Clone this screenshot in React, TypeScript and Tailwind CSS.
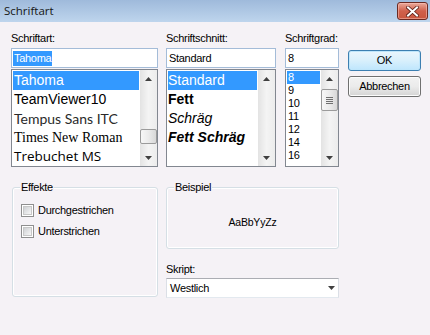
import React from 'react';

const ui = "font-['Liberation_Sans',Arial,sans-serif] text-[11px] tracking-[-0.3px] text-black";

const fontItems = [
  { name: 'Tahoma', cls: "font-['Liberation_Sans',sans-serif]" },
  { name: 'TeamViewer10', cls: "font-['Liberation_Sans',sans-serif]" },
  { name: 'Tempus Sans ITC', cls: "font-['Lato',sans-serif] text-[#2a2a2a]" },
  { name: 'Times New Roman', cls: "font-['Liberation_Serif',serif]" },
  { name: 'Trebuchet MS', cls: "font-['Open_Sans',sans-serif] text-[13.5px]" },
];

const styleItems = [
  { name: 'Standard', cls: '' },
  { name: 'Fett', cls: 'font-bold' },
  { name: 'Schräg', cls: 'italic' },
  { name: 'Fett Schräg', cls: 'font-bold italic' },
];

const sizes = ['8', '9', '10', '11', '12', '14', '16'];

const Arrow = ({ down }: { down?: boolean }) => (
  <svg width="7" height="4" viewBox="0 0 7 4">
    <path d={down ? 'M0 0H7L3.5 4Z' : 'M0 4H7L3.5 0Z'} fill="#404040" />
  </svg>
);

const ScrollBar = ({ offset, thumb, grip }: { offset: number; thumb: number; grip?: boolean }) => (
  <div className="w-[17px] flex flex-col bg-gradient-to-r from-[#e3e3e3] via-[#f4f4f4] to-[#ececec]">
    <div className="h-[17px] flex items-center justify-center shrink-0">
      <Arrow />
    </div>
    <div className="shrink-0" style={{ height: offset }} />
    {thumb > 0 && (
      <div
        className="shrink-0 rounded-[2px] border border-[#9b9b9b] bg-gradient-to-r from-[#f7f7f7] via-[#ebebeb] to-[#d8d8d8] flex flex-col items-center justify-center gap-[1px]"
        style={{ height: thumb }}
      >
        {grip && (
          <>
            <div className="w-[7px] h-[1px] bg-[#6f6f6f]" />
            <div className="w-[7px] h-[1px] bg-[#6f6f6f]" />
            <div className="w-[7px] h-[1px] bg-[#6f6f6f]" />
            <div className="w-[7px] h-[1px] bg-[#6f6f6f]" />
          </>
        )}
      </div>
    )}
    <div className="flex-1" />
    <div className="h-[17px] flex items-center justify-center shrink-0">
      <Arrow down />
    </div>
  </div>
);

const TextBox = ({ children, w }: { children: React.ReactNode; w: string }) => (
  <div className={`${w} h-[20px] border border-[#a4bcd8] bg-white flex items-center px-[1px] overflow-hidden`}>
    {children}
  </div>
);

const Label = ({ children }: { children: React.ReactNode }) => (
  <div className="h-[15px] leading-[15px] mb-[2px]">{children}</div>
);

const CheckBox = ({ label }: { label: string }) => (
  <div className="flex items-center h-[13px]">
    <div className="w-[13px] h-[13px] border border-[#8f8f8f] bg-white p-[1px] shrink-0">
      <div className="w-full h-full border border-[#c8c8c8] bg-gradient-to-br from-[#cfd1d4] to-[#f7f7f7]" />
    </div>
    <span className="ml-[4px] leading-[13px]">{label}</span>
  </div>
);

export default function App() {
  return (
    <div className={`w-[430px] h-[335px] bg-[#f5f2f6] overflow-hidden ${ui}`}>
      {/* title bar */}
      <div className="h-[22px] bg-gradient-to-b from-[#9fbadb] to-[#bed5ed] flex items-start justify-between">
        <span className="font-['Open_Sans',sans-serif] text-[11.5px] tracking-[0px] text-[#151515] ml-[4px] mt-[3px] leading-[16px]">
          Schriftart
        </span>
        <div className="mt-[2px] mr-[2px] w-[31px] h-[18px] rounded-[3px] border border-[#6b2a22] bg-gradient-to-b from-[#e9a99b] via-[#d0604b] to-[#c9573f] flex items-center justify-center shadow-[inset_0_0_0_1px_rgba(255,200,190,0.5)]">
          <svg width="13" height="11" viewBox="0 0 13 11">
            <path d="M2 1.5L11 9.5M11 1.5L2 9.5" stroke="#5a1d16" strokeWidth="3.6" strokeLinecap="square" />
            <path d="M2 1.5L11 9.5M11 1.5L2 9.5" stroke="#ffffff" strokeWidth="2" strokeLinecap="square" />
          </svg>
        </div>
      </div>

      <div className="pl-[11px] pt-[9px]">
        {/* top row */}
        <div className="flex">
          <div className="w-[147px]">
            <Label>Schriftart:</Label>
            <TextBox w="w-[147px]">
              <span className="bg-[#3399ff] text-white px-[1px] leading-[15px]">Tahoma</span>
            </TextBox>
            <div className="mt-[1px] w-[147px] h-[98px] border border-[#828790] bg-white flex p-[1px] pr-0">
              <div className="flex-1 overflow-hidden text-[14px] tracking-[0px]">
                {fontItems.map((f, i) => (
                  <div
                    key={f.name}
                    className={`h-[19px] leading-[19px] pl-[1px] whitespace-nowrap ${f.cls} ${i === 0 ? 'bg-[#3399ff] text-white' : ''}`}
                  >
                    {f.name}
                  </div>
                ))}
              </div>
              <div className="ml-[1px] -my-[1px] flex">
                <ScrollBar offset={42} thumb={15} />
              </div>
            </div>
          </div>

          <div className="w-[110px] ml-[8px]">
            <Label>Schriftschnitt:</Label>
            <TextBox w="w-[110px]">
              <span className="pl-[1px]">Standard</span>
            </TextBox>
            <div className="mt-[1px] w-[110px] h-[98px] border border-[#828790] bg-white flex p-[1px] pr-0">
              <div className="flex-1 overflow-hidden text-[14px] tracking-[0px] font-['Liberation_Sans',sans-serif]">
                {styleItems.map((s, i) => (
                  <div
                    key={s.name}
                    className={`h-[19px] leading-[19px] whitespace-nowrap ${s.cls} ${i === 0 ? 'bg-[#3399ff] text-white' : ''}`}
                  >
                    {s.name}
                  </div>
                ))}
              </div>
              <div className="ml-[1px] -my-[1px] flex">
                <ScrollBar offset={0} thumb={0} />
              </div>
            </div>
          </div>

          <div className="w-[54px] ml-[9px]">
            <Label>Schriftgrad:</Label>
            <TextBox w="w-[54px]">
              <span className="pl-[1px]">8</span>
            </TextBox>
            <div className="mt-[1px] w-[54px] h-[98px] border border-[#828790] bg-white flex p-[1px] pr-0">
              <div className="flex-1 overflow-hidden">
                {sizes.map((s, i) => (
                  <div
                    key={s}
                    className={`h-[13px] leading-[13px] pl-[1px] ${i === 0 ? 'bg-[#3399ff] text-white' : ''}`}
                  >
                    {s}
                  </div>
                ))}
              </div>
              <div className="ml-[1px] -my-[1px] flex">
                <ScrollBar offset={2} thumb={22} grip />
              </div>
            </div>
          </div>

          <div className="w-[73px] ml-[9px] pt-[19px] flex flex-col gap-[5px]">
            <div className="h-[21px] rounded-[3px] border border-[#3c7fb1] bg-gradient-to-b from-[#eaf6fd] via-[#d9f0fc] to-[#bee6fd] shadow-[inset_0_0_0_1px_#bfe6fb] flex items-center justify-center">
              OK
            </div>
            <div className="h-[21px] rounded-[3px] border border-[#707070] bg-gradient-to-b from-[#f2f2f2] via-[#ebebeb] to-[#d4d4d4] shadow-[inset_0_0_0_1px_#fcfcfc] flex items-center justify-center">
              Abbrechen
            </div>
          </div>
        </div>

        {/* bottom row */}
        <div className="flex mt-[20px]">
          <div className="relative ml-[1px] w-[146px] h-[110px] rounded-[3px] border border-[#d5dfe5] shadow-[inset_0_0_0_1px_#ffffff] pt-[16px] pl-[8px] flex flex-col gap-[8px]">
            <span className="absolute -top-[8px] left-[7px] px-[1px] bg-[#f5f2f6] leading-[15px]">Effekte</span>
            <CheckBox label="Durchgestrichen" />
            <CheckBox label="Unterstrichen" />
          </div>

          <div className="ml-[8px] w-[173px]">
            <div className="relative h-[62px] rounded-[3px] border border-[#d5dfe5] shadow-[inset_0_0_0_1px_#ffffff] flex items-center justify-center pt-[9px]">
              <span className="absolute -top-[8px] left-[7px] px-[1px] bg-[#f5f2f6] leading-[15px]">Beispiel</span>
              <span className="font-['Liberation_Sans',sans-serif] text-[10.5px] tracking-[-0.2px]">AaBbYyZz</span>
            </div>
            <div className="mt-[13px] h-[15px] leading-[15px]">Skript:</div>
            <div className="mt-[1px] h-[20px] border border-[#abadb3] border-b-[#e3e9ef] border-x-[#dbdfe6] bg-white flex items-center justify-between pl-[3px] pr-[3px]">
              <span>Westlich</span>
              <Arrow down />
            </div>
          </div>
        </div>
      </div>
    </div>
  );
}
